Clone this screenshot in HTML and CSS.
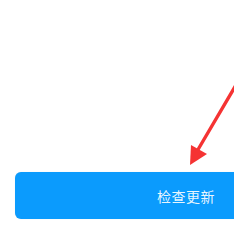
FILE: index.html
```html
<!DOCTYPE html>
<html>
<head>
<meta charset="UTF-8">
<meta name="viewport" content="width=device-width, initial-scale=1">
<link rel="stylesheet" href="styles.css">
</head>
<body>
<div class="page">
  <div class="content"></div>
  <button class="update-btn">检查更新</button>
</div>

<!-- annotation arrow pointing at the button -->
<svg class="arrow" width="234" height="225" viewBox="0 0 234 225">
  <line x1="236" y1="85" x2="196" y2="153" stroke="#f53333" stroke-width="3.4" stroke-linecap="round"/>
  <polygon points="190,165 191,145 207,154" fill="#f53333"/>
</svg>
</body>
</html>
```

FILE: styles.css
```css
html, body {
  margin: 0;
  padding: 0;
  background: #fff;
  font-family: "Noto Sans CJK SC", "Noto Sans", sans-serif;
}

.page {
  width: 234px;
  height: 225px;
  padding-left: 15px;
  box-sizing: border-box;
  overflow: hidden;
}

.content {
  height: 172px;
}

/* big blue button, runs off the right edge */
.update-btn {
  display: block;
  width: 342px;
  height: 47px;
  border: none;
  border-radius: 6px;
  background-color: #0b9bfd;
  color: rgba(255,255,255,0.92);
  font-family: "Noto Sans CJK SC", sans-serif;
  font-size: 14px;
  letter-spacing: 0.5px;
  padding: 0;
  box-shadow: 0 0 1px rgba(0,0,0,0.15);
}

.arrow {
  position: absolute;
  left: 0;
  top: 0;
}
```
